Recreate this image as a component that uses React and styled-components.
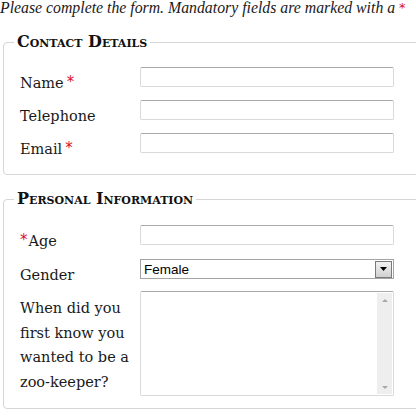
import React from "react";
import styled, { createGlobalStyle } from "styled-components";

const Global = createGlobalStyle`
  html, body { margin: 0; padding: 0; background: #fff; }
  body { overflow: hidden; width: 416px; height: 416px; font-family: "DejaVu Serif", serif; color: #1a1a1a; }
  * { box-sizing: border-box; }
`;

const Page = styled.div`
  display: flex;
  flex-direction: column;
  width: 416px;
`;

const Intro = styled.p`
  margin: -1px 0 0 0;
  font-family: "Liberation Serif", serif;
  font-style: italic;
  font-size: 15.8px;
  line-height: 17px;
  white-space: nowrap;
  color: #1a1a1a;
`;

const Star = styled.span`
  color: #d8102c;
  font-family: "DejaVu Sans", sans-serif;
  font-size: ${(p) => (p.$small ? 13 : 15)}px;
  font-style: normal;
  line-height: 1;
  position: relative;
  top: -1px;
  margin: ${(p) => (p.$before ? "0 1px 0 0" : p.$small ? "0" : "0 0 0 3px")};
`;

const Fieldset = styled.fieldset`
  margin: ${(p) => p.$top}px -12px 0 3px;
  padding: 0 16px ${(p) => p.$bottom}px 16px;
  border: 1px solid #d6d6d6;
  border-radius: 4px;
  min-width: 0;
`;

const Legend = styled.legend`
  margin-left: -6px;
  padding: 0 3px;
  font-family: "DejaVu Serif", serif;
  font-weight: bold;
  font-variant: small-caps;
  font-size: 16px;
  line-height: 20px;
  color: #111;
`;

const Rows = styled.div`
  display: flex;
  flex-direction: column;
  padding-top: ${(p) => p.$pad}px;
`;

const Row = styled.div`
  display: grid;
  grid-template-columns: 120px 254px;
  align-items: start;
  margin-top: ${(p) => p.$gap || 0}px;
`;

const Label = styled.label`
  font-size: 14.5px;
  line-height: ${(p) => (p.$multi ? "24.5px" : "18px")};
  padding-top: ${(p) => (p.$multi ? 5 : 7)}px;
  color: #1a1a1a;
`;

const TextInput = styled.input`
  width: 254px;
  height: 20px;
  margin: 0;
  padding: 1px 3px;
  border: 1px solid #d9d9d9;
  border-top-color: #a9a9a9;
  border-radius: 2px;
  background: #fff;
  font-family: "Liberation Sans", sans-serif;
  font-size: 13px;
  outline: none;
`;

const SelectBox = styled.div`
  display: flex;
  width: 254px;
  height: 20px;
  border: 1px solid #a4a4a4;
  background: #fff;
`;

const Select = styled.select`
  flex: 1;
  min-width: 0;
  appearance: none;
  border: none;
  margin: 0;
  padding: 0 3px;
  background: transparent;
  font-family: "Liberation Sans", sans-serif;
  font-size: 13.5px;
  color: #000;
  outline: none;
`;

const ArrowButton = styled.div`
  width: 17px;
  height: 17px;
  margin: 0 1px 0 0;
  align-self: center;
  border: 1px solid #7a7a7a;
  background: linear-gradient(#f2f2f2, #d0d0d0);
  display: flex;
  align-items: center;
  justify-content: center;
`;

const AreaBox = styled.div`
  display: flex;
  width: 254px;
  height: 105px;
  border: 1px solid #d9d9d9;
  border-top-color: #a9a9a9;
  border-radius: 2px;
  background: #fff;
`;

const TextArea = styled.textarea`
  flex: 1;
  min-width: 0;
  border: none;
  resize: none;
  margin: 0;
  padding: 2px 3px;
  font-family: "Liberation Sans", sans-serif;
  font-size: 13px;
  outline: none;
`;

const Track = styled.div`
  width: 15px;
  margin: 1px 1px 1px 0;
  background: #eeeeee;
  display: flex;
  flex-direction: column;
  justify-content: space-between;
  align-items: center;
  padding: 6px 0 5px;
`;

const Tri = ({ down, color, w = 7, h = 4 }) => (
  <svg width={w} height={h} viewBox={`0 0 ${w} ${h}`}>
    {down ? (
      <polygon points={`0,0 ${w},0 ${w / 2},${h}`} fill={color} />
    ) : (
      <polygon points={`0,${h} ${w},${h} ${w / 2},0`} fill={color} />
    )}
  </svg>
);

export default function App() {
  return (
    <Page>
      <Global />
      <Intro>
        Please complete the form. Mandatory fields are marked with a <Star $small>*</Star>
      </Intro>

      <Fieldset $top={16} $bottom={16}>
        <Legend>Contact Details</Legend>
        <Rows $pad={15}>
          <Row>
            <Label htmlFor="name">
              Name<Star>*</Star>
            </Label>
            <TextInput id="name" />
          </Row>
          <Row $gap={8}>
            <Label htmlFor="tel">Telephone</Label>
            <TextInput id="tel" />
          </Row>
          <Row $gap={8}>
            <Label htmlFor="email">
              Email<Star>*</Star>
            </Label>
            <TextInput id="email" />
          </Row>
        </Rows>
      </Fieldset>

      <Fieldset $top={14} $bottom={12}>
        <Legend>Personal Information</Legend>
        <Rows $pad={16}>
          <Row>
            <Label htmlFor="age">
              <Star $before>*</Star>Age
            </Label>
            <TextInput id="age" />
          </Row>
          <Row $gap={9}>
            <Label htmlFor="gender">Gender</Label>
            <SelectBox>
              <Select id="gender" defaultValue="Female">
                <option>Female</option>
                <option>Male</option>
              </Select>
              <ArrowButton>
                <Tri down color="#000" />
              </ArrowButton>
            </SelectBox>
          </Row>
          <Row $gap={7}>
            <Label htmlFor="zoo" $multi>
              When did you first know you wanted to be a zoo-keeper?
            </Label>
            <AreaBox>
              <TextArea id="zoo" />
              <Track>
                <Tri color="#a8a8a8" w={6} h={3} />
                <Tri down color="#a8a8a8" w={6} h={3} />
              </Track>
            </AreaBox>
          </Row>
        </Rows>
      </Fieldset>
    </Page>
  );
}
